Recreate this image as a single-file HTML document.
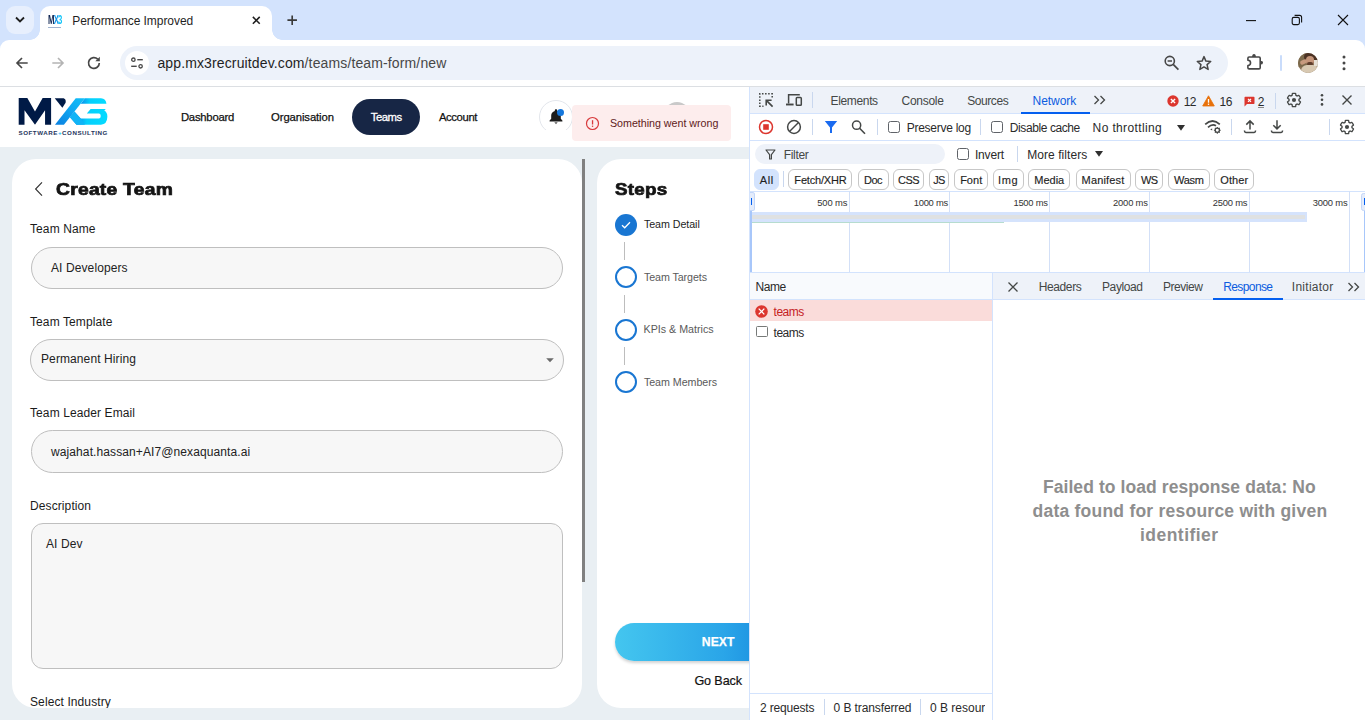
<!DOCTYPE html>
<html lang="en">
<head>
<meta charset="utf-8">
<title>Performance Improved</title>
<style>
*{box-sizing:border-box;margin:0;padding:0}
html,body{width:1365px;height:720px;overflow:hidden;background:#fff}
body{position:relative;font-family:"Liberation Sans",sans-serif;color:#1f1f1f}
.abs{position:absolute}
.t{position:absolute;white-space:nowrap;line-height:1}
svg{position:absolute;overflow:visible}
/* ---------- browser chrome ---------- */
#tabstrip{left:0;top:0;width:1365px;height:52px;background:#d3e3fd}
#tabsearch{left:6px;top:6px;width:28px;height:28px;border-radius:9px;background:#e7effd}
#tab{left:40px;top:6px;width:232px;height:34px;background:#fff;border-radius:10px 10px 0 0}
#tab:before,#tab:after{content:"";position:absolute;bottom:0;width:10px;height:10px}
#tab:before{left:-10px;background:radial-gradient(circle at 0 0,transparent 9.5px,#fff 10px)}
#tab:after{right:-10px;background:radial-gradient(circle at 100% 0,transparent 9.5px,#fff 10px)}
#toolbar{left:0;top:40px;width:1365px;height:46px;background:#fff;border-radius:9px 9px 0 0}
#tbline{left:0;top:86px;width:1365px;height:1px;background:#dcdfe3}
#omni{left:120px;top:46px;width:1108px;height:34px;border-radius:17px;background:#edf2fa}
#siteinfo{left:124.500px;top:51px;width:24px;height:24px;border-radius:12px;background:#fff}
.chrometxt{font-family:"Liberation Sans",sans-serif}
/* ---------- page ---------- */
#page{left:0;top:87px;width:749px;height:633px;background:#e9eff3;overflow:hidden}
#hdr{left:0;top:0;width:750px;height:60px;background:#fff}
.nav{font-size:11.3px;color:#111;-webkit-text-stroke:0.25px #111}
#teams{left:352px;top:12px;width:68px;height:36px;border-radius:18px;background:#172645}
.card{background:#fff;border-radius:24px}
.lbl{font-size:12px;color:#1b1b1b;letter-spacing:.1px}
.inp{position:absolute;left:30px;width:532px;background:#f7f7f7;border:1px solid #bfbfbf}
.val{font-size:12px;color:#222;letter-spacing:.1px}
.step{font-size:10.700px;color:#5a5a5a}
/* ---------- devtools ---------- */
#dt{left:749px;top:87px;width:616px;border-left:1px solid #d3e3fd;height:633px;background:#fff;overflow:hidden;font-size:12px;color:#2a2a2a}
.dtbar{background:#eef2f9}
.hl{background:#d3e3fd}
.vsep{position:absolute;width:1px;background:#c9d7ee}
.chip{position:absolute;top:82px;height:21px;border:1px solid #c7c7c7;border-radius:6px;font-size:11px;line-height:20px;text-align:center;color:#1f1f1f;background:#fff;-webkit-text-stroke:0.150px #1f1f1f}
.msg{font-size:17.500px;font-weight:bold;color:#8e8e8e}
.cb{position:absolute;width:12px;height:12px;border:1px solid #5f6368;border-radius:2.5px;background:#fff}
.tick{position:absolute;top:104px;width:1px;height:82px;background:#d3e0f7}
.tl{position:absolute;top:110.500px;font-size:9.4px;color:#333;white-space:nowrap;line-height:1;text-align:right;width:60px}
</style>
</head>
<body>
<!-- ================= BROWSER CHROME ================= -->
<div id="tabstrip" class="abs"></div>
<div id="tabsearch" class="abs"></div>
<svg style="left:14px;top:16px" width="12" height="8" viewBox="0 0 12 8"><path d="M2 1.5 L6 5.5 L10 1.5" fill="none" stroke="#1f1f1f" stroke-width="1.8"/></svg>
<div id="tab" class="abs"></div>
<div id="toolbar" class="abs"></div>
<div id="tbline" class="abs"></div>
<div class="t chrometxt" style="left:72.30px;top:15.400px;font-size:12px;color:#1f1f1f;letter-spacing:-0.062px">Performance Improved</div>
<div id="omni" class="abs"></div>
<div id="siteinfo" class="abs"></div>
<div class="t chrometxt" style="left:157.400px;top:56px;font-size:14px;color:#1f1f1f;letter-spacing:0.130px">app.mx3recruitdev.com<span style="color:#474747">/teams/team-form/new</span></div>

<!-- favicon -->
<div class="t" style="left:48px;top:13.500px;font-size:12.500px;font-weight:bold;color:#0d2350;letter-spacing:-1.300px;transform:scaleX(.62);transform-origin:0 50%">M<span style="color:#1296ea">X</span><span style="color:#10c4f8">3</span></div>
<div class="abs" style="left:48px;top:26.500px;width:13px;height:1px;background:#9fb3cf"></div>
<!-- tab close / new tab -->
<svg style="left:251.700px;top:15.700px" width="8.600" height="8.600" viewBox="0 0 10 10"><path d="M1 1 L9 9 M9 1 L1 9" stroke="#1f1f1f" stroke-width="1.800" fill="none"/></svg>
<svg style="left:286.800px;top:14.800px" width="10.400" height="10.400" viewBox="0 0 12 12"><path d="M6 0.500 V11.500 M0.500 6 H11.500" stroke="#3a3a3a" stroke-width="1.900" fill="none"/></svg>
<!-- window controls -->
<svg style="left:1246px;top:20px" width="10" height="2" viewBox="0 0 10 2"><path d="M0 .6 H10" stroke="#111" stroke-width="1.100"/></svg>
<svg style="left:1291px;top:14px" width="12" height="12" viewBox="0 0 12 12"><rect x="1.200" y="3.400" width="7.200" height="7.200" rx="1.600" fill="none" stroke="#111" stroke-width="1.100"/><path d="M3.600 1.400 H8.600 Q10.600 1.400 10.600 3.400 V8.400" fill="none" stroke="#111" stroke-width="1.100"/></svg>
<svg style="left:1338px;top:15px" width="10" height="10" viewBox="0 0 10 10"><path d="M0 0 L10 10 M10 0 L0 10" stroke="#111" stroke-width="1.100" fill="none"/></svg>
<!-- nav buttons -->
<svg style="left:15px;top:56px" width="14" height="14" viewBox="0 0 16 16"><path d="M14.500 8 H2.500 M8 2.300 L2.300 8 L8 13.700" fill="none" stroke="#474747" stroke-width="1.900"/></svg>
<svg style="left:51px;top:56px" width="14" height="14" viewBox="0 0 16 16"><path d="M1.500 8 H13.500 M8 2.300 L13.700 8 L8 13.700" fill="none" stroke="#b4b4b4" stroke-width="1.900"/></svg>
<svg style="left:86px;top:55px" width="16" height="16" viewBox="0 0 16 16"><path d="M13.300 8 A5.400 5.400 0 1 1 11.700 4.150" fill="none" stroke="#474747" stroke-width="1.700"/><path d="M13.800 1.800 V6.300 H9.300 Z" fill="#474747"/></svg>
<!-- site info (tune) icon -->
<svg style="left:130px;top:56px" width="14" height="14" viewBox="0 0 14 14"><circle cx="3.400" cy="3.700" r="1.700" fill="none" stroke="#474747" stroke-width="1.300"/><path d="M7.300 3.700 H12.800" stroke="#474747" stroke-width="1.400"/><circle cx="10.600" cy="10.300" r="1.700" fill="none" stroke="#474747" stroke-width="1.300"/><path d="M1.200 10.300 H6.700" stroke="#474747" stroke-width="1.400"/></svg>
<!-- zoom, star -->
<svg style="left:1163.100px;top:53.700px" width="18" height="18" viewBox="0 0 18 18"><circle cx="6.800" cy="7" r="4.600" fill="none" stroke="#474747" stroke-width="1.600"/><path d="M4.600 7 H9" stroke="#474747" stroke-width="1.500"/><path d="M10.200 10.400 L15.400 15.600" stroke="#474747" stroke-width="1.700"/></svg>
<svg style="left:1196px;top:54.700px" width="16" height="16" viewBox="0 0 16 16"><path d="M8 1.600 L9.900 6.100 L14.700 6.500 L11.050 9.650 L12.150 14.400 L8 11.900 L3.850 14.400 L4.950 9.650 L1.300 6.500 L6.100 6.100 Z" fill="none" stroke="#474747" stroke-width="1.500" stroke-linejoin="round"/></svg>
<!-- extensions -->
<svg style="left:1246px;top:53px" width="18" height="18" viewBox="0 0 18 18"><path d="M3.100 4 H13 Q14.200 4 14.200 5.200 V14.700 Q14.200 15.900 13 15.900 H3.100 Q1.900 15.900 1.900 14.700 V12.500 A2.650 2.650 0 0 0 1.900 7.200 V5.200 Q1.900 4 3.100 4 Z" fill="none" stroke="#474747" stroke-width="1.600" stroke-linejoin="round"/><path d="M6.100 4 A1.900 3 0 0 1 9.900 4 Z" fill="#474747"/><path d="M14.200 7.800 A2.800 1.900 0 0 1 14.200 11.600 Z" fill="#474747"/></svg>
<div class="abs" style="left:1280px;top:55px;width:2px;height:15.700px;background:#c9dcfb;border-radius:1px"></div>
<!-- avatar -->
<div class="abs" style="left:1298px;top:53px;width:20px;height:20px;border-radius:10px;overflow:hidden;background:#8a7358"><div class="abs" style="left:0;top:0;width:20px;height:20px;filter:blur(.7px)">
  <div class="abs" style="left:-2px;top:-2px;width:12px;height:16px;background:#7c6a4c"></div>
  <div class="abs" style="left:6px;top:-2px;width:16px;height:12px;border-radius:6px;background:#4b3224"></div>
  <div class="abs" style="left:8px;top:3px;width:8px;height:9px;border-radius:4px;background:#c4957a"></div>
  <div class="abs" style="left:9px;top:9px;width:6px;height:4px;border-radius:2px;background:#5e3d2c"></div>
  <div class="abs" style="left:3px;top:12px;width:18px;height:10px;border-radius:6px 6px 0 0;background:#d8c9b2"></div>
  <div class="abs" style="left:2px;top:7px;width:7px;height:4px;border-radius:2px;background:#c79a7e;transform:rotate(-25deg)"></div>
  <div class="abs" style="left:16px;top:7px;width:5px;height:6px;background:#e6e0d6"></div>
</div></div>
<svg style="left:1341px;top:54px" width="6" height="18" viewBox="0 0 6 18"><circle cx="3" cy="3" r="1.500" fill="#474747"/><circle cx="3" cy="8.900" r="1.500" fill="#474747"/><circle cx="3" cy="14.800" r="1.500" fill="#474747"/></svg>

<!-- ================= PAGE ================= -->
<div id="page" class="abs">
  <div id="hdr" class="abs"></div>
  <!-- logo -->
  <svg style="left:10px;top:3px" width="110" height="55" viewBox="0 0 1365 682">
    <polygon points="108,100 215,100 310,268 405,100 510,100 510,430 435,430 435,250 312,428 308,428 180,250 180,430 108,430" fill="#001a46"/>
  </svg>
  <svg style="left:50px;top:7px" width="62" height="34" viewBox="0 0 1313 720">
    <defs>
      <linearGradient id="gx" x1="0" y1="1" x2="1" y2="0"><stop offset="0" stop-color="#0a7fe0"/><stop offset="0.55" stop-color="#0fa8f2"/><stop offset="1" stop-color="#12c0f8"/></linearGradient>
      <linearGradient id="gb" x1="0" y1="0" x2="1" y2="0"><stop offset="0" stop-color="#0c8eea"/><stop offset="0.35" stop-color="#05cffc"/><stop offset="1" stop-color="#04dbff"/></linearGradient>
      <linearGradient id="gb2" x1="0" y1="0" x2="1" y2="0"><stop offset="0" stop-color="#0d9ff0"/><stop offset="0.18" stop-color="#0c8eea"/><stop offset="0.45" stop-color="#05cffc"/><stop offset="1" stop-color="#04dbff"/></linearGradient>
    </defs>
    <path d="M100,90 L290,90 Q345,110 330,185 L262,290 Z" fill="#001a46"/>
    <path d="M650,205 L1195,205 Q1185,100 1080,90 L740,90 Z" fill="url(#gb)"/>
    <path d="M517,370 L650,520 L1040,520 Q1075,515 1075,468 Q1075,420 1040,415 L780,415 L860,315 L1182,315 L1150,352 Q1215,390 1215,480 Q1210,640 1080,650 L560,650 L422,490 Z" fill="url(#gb2)"/>
    <path d="M105,650 L295,650 L740,90 L545,90 Z" fill="url(#gx)"/>
    <path d="M422,490 L517,370 L650,520 L740,650 L560,650 Z" fill="#10b4f6"/>
  </svg>
  <div class="t" style="left:18.5px;top:43.4px;font-size:6.2px;font-weight:bold;color:#24345c;letter-spacing:0.540px">SOFTWARE<span style="color:#12b8f5">+</span>CONSULTING</div>
  <!-- nav -->
  <div class="t nav" style="left:180.90px;top:25px;letter-spacing:-0.223px">Dashboard</div>
  <div class="t nav" style="left:271.10px;top:25px;letter-spacing:-0.106px">Organisation</div>
  <div id="teams" class="abs"></div>
  <div class="t nav" style="left:370.70px;top:25px;color:#fff;-webkit-text-stroke:0.3px #fff;letter-spacing:-0.431px">Teams</div>
  <div class="t nav" style="left:438.90px;top:25px;letter-spacing:-0.380px">Account</div>
  <!-- bell -->
  <div class="abs" style="left:539px;top:13px;width:34px;height:30px;overflow:hidden"><div class="abs" style="left:0;top:0;width:34px;height:34px;border-radius:17px;border:1px solid #e3e6ec;background:#fff"></div></div>
  <svg style="left:548px;top:21px" width="16" height="18" viewBox="0 0 16 18"><path d="M8 1.2c-.7 0-1.2.5-1.2 1.2v.5C4.500 3.500 3.200 5.400 3.200 7.600v3.200L1.600 12.600v.9h12.800v-.9l-1.600-1.800V7.600c0-2.200-1.300-4.100-3.600-4.700v-.5c0-.7-.5-1.200-1.200-1.200z" fill="#1c1c1c"/><path d="M6.300 14.300 L9.700 14.300 L8 16.200 Z" fill="#555"/></svg>
  <div class="abs" style="left:557px;top:21.500px;width:7px;height:7px;border-radius:4px;background:#1677dc"></div>
  <!-- avatar behind toast -->
  <div class="abs" style="left:664px;top:15px;width:26px;height:26px;border-radius:13px;background:#c9c9c9"></div>
  <!-- toast -->
  <div class="abs" style="left:572px;top:18px;width:159px;height:36px;border-radius:4px;background:#fdeded"></div>
  <svg style="left:584.500px;top:28.800px" width="15" height="15" viewBox="0 0 15 15"><circle cx="7.500" cy="7.500" r="6" fill="none" stroke="#d8393b" stroke-width="1.200"/><rect x="6.900" y="4.200" width="1.300" height="4.300" fill="#d8393b"/><rect x="6.900" y="9.600" width="1.300" height="1.300" fill="#d8393b"/></svg>
  <div class="t" style="left:610.00px;top:31px;font-size:10.700px;color:#5f2120;letter-spacing:-0.020px">Something went wrong</div>

  <!-- card 1 -->
  <div class="abs card" style="left:12px;top:72px;width:570px;height:549px;overflow:hidden">
    <svg style="left:22px;top:22.800px" width="10" height="14" viewBox="0 0 10 14"><path d="M8 0.400 L1.600 7 L8 13.600" fill="none" stroke="#333" stroke-width="1.150"/></svg>
    <div class="t" id="h1" style="left:44px;top:22px;font-size:16.500px;font-weight:bold;color:#141414;-webkit-text-stroke:0.720px #141414;transform:scaleX(1.170);transform-origin:0 50%;letter-spacing:0.200px">Create Team</div>
    <div class="t lbl" style="left:18px;top:64px">Team Name</div>
    <div class="inp" style="left:19px;top:88px;height:42px;border-radius:21px"></div>
    <div class="t val" style="left:39px;top:103px">AI Developers</div>
    <div class="t lbl" style="left:18px;top:157px">Team Template</div>
    <div class="inp" style="left:18px;top:180px;height:42px;border-radius:21px;width:534px"></div>
    <div class="t val" style="left:29px;top:194px">Permanent Hiring</div>
    <svg style="left:534px;top:199px" width="8" height="5" viewBox="0 0 8 5"><path d="M0.200 0.300 L7.800 0.300 L4 4.300 Z" fill="#6a6a6a"/></svg>
    <div class="t lbl" style="left:18px;top:248px">Team Leader Email</div>
    <div class="inp" style="left:19px;top:271px;height:42.600px;border-radius:21.300px"></div>
    <div class="t val" style="left:39px;top:287px">wajahat.hassan+AI7@nexaquanta.ai</div>
    <div class="t lbl" style="left:18px;top:341px">Description</div>
    <div class="inp" style="left:19px;top:364px;height:146px;border-radius:12px"></div>
    <div class="t val" style="left:34px;top:379px">AI Dev</div>
    <div class="t lbl" style="left:18px;top:537px">Select Industry</div>
  </div>
  <!-- scrollbar -->
  <div class="abs" style="left:582px;top:72px;width:3px;height:423px;background:#808080"></div>

  <!-- card 2 -->
  <div class="abs card" style="left:597px;top:72px;width:200px;height:549px;overflow:hidden">
    <div class="t" id="h2" style="left:18px;top:22px;font-size:16.500px;font-weight:bold;color:#141414;-webkit-text-stroke:0.720px #141414;transform:scaleX(1.140);transform-origin:0 50%;letter-spacing:0.200px">Steps</div>
    <div class="abs" style="left:27px;top:83px;width:1px;height:18px;background:#bdbdbd"></div>
    <div class="abs" style="left:27px;top:136px;width:1px;height:18px;background:#bdbdbd"></div>
    <div class="abs" style="left:27px;top:188px;width:1px;height:18px;background:#bdbdbd"></div>
    <div class="abs" style="left:17.700px;top:54.700px;width:22.500px;height:22.500px;border-radius:12px;background:#1976d2"></div>
    <svg style="left:24px;top:62px" width="10" height="8" viewBox="0 0 10 8"><path d="M1 4.200 L3.700 6.800 L9 1.300" fill="none" stroke="#fff" stroke-width="1.300"/></svg>
    <div class="abs" style="left:18px;top:107px;width:22px;height:22px;border-radius:11px;border:2px solid #1976d2"></div>
    <div class="abs" style="left:18px;top:160px;width:22px;height:22px;border-radius:11px;border:2px solid #1976d2"></div>
    <div class="abs" style="left:18px;top:212px;width:22px;height:22px;border-radius:11px;border:2px solid #1976d2"></div>
    <div class="t step" style="left:46.90px;top:60.200px;color:#1d1d1d;letter-spacing:-0.055px">Team Detail</div>
    <div class="t step" style="left:46.90px;top:112.5px;letter-spacing:-0.073px">Team Targets</div>
    <div class="t step" style="left:46.500px;top:164.700px">KPIs &amp; Matrics</div>
    <div class="t step" style="left:46.90px;top:217.5px;letter-spacing:-0.045px">Team Members</div>
    <div class="abs" style="left:18px;top:464px;width:210px;height:38px;border-radius:19px;background:linear-gradient(90deg,#44c6ef 0%,#2aa5e8 52%,#1b8fe0 72%);box-shadow:0 2px 3px rgba(0,0,0,.18)"></div>
    <div class="t" style="left:104.800px;top:477px;font-size:12.200px;font-weight:bold;color:#fff;letter-spacing:0.050px;-webkit-text-stroke:0.250px #fff">NEXT</div>
    <div class="t" style="left:97.40px;top:515.500px;font-size:12.600px;color:#111;-webkit-text-stroke:0.200px #111;letter-spacing:-0.108px">Go Back</div>
  </div>
</div>

<!-- ================= DEVTOOLS ================= -->
<div id="dt" class="abs">
  <div class="abs" style="left:0;top:0;width:0px;height:633px"></div>
  <!-- main tab bar -->
  <div class="abs dtbar" style="left:0;top:0;width:615px;height:26px"></div>
  <div class="abs hl" style="left:0;top:26px;width:615px;height:1px"></div>
  <div class="vsep" style="left:62px;top:5px;height:16px"></div>
  <div class="t" style="left:80.61px;top:8px;color:#444746;letter-spacing:-0.360px">Elements</div>
  <div class="t" style="left:151.61px;top:8px;color:#444746;letter-spacing:-0.292px">Console</div>
  <div class="t" style="left:217.21px;top:8px;color:#444746;letter-spacing:-0.420px">Sources</div>
  <div class="t" style="left:282.50px;top:8px;color:#0b5ce0;letter-spacing:-0.035px">Network</div>
  <div class="abs" style="left:271px;top:25px;width:69px;height:2px;background:#045fef"></div>
  <div class="t" style="left:433.80px;top:8.500px;letter-spacing:-0.600px">12</div>
  <div class="t" style="left:469.61px;top:8.500px;letter-spacing:-0.600px">16</div>
  <div class="t" style="left:507.80px;top:8.500px;letter-spacing:0.000px">2</div>
  <div class="vsep" style="left:525px;top:6px;height:16px"></div>
  <!-- network toolbar -->
  <div class="abs" style="left:0;top:27px;width:615px;height:26px;background:#fff"></div>
  <div class="abs hl" style="left:0;top:53px;width:615px;height:1px"></div>
  <div class="vsep" style="left:62px;top:32px;height:16px"></div>
  <div class="vsep" style="left:127px;top:32px;height:16px"></div>
  <div class="cb" style="left:138px;top:34px"></div>
  <div class="t" style="left:156.71px;top:35px;letter-spacing:-0.263px">Preserve log</div>
  <div class="vsep" style="left:230px;top:32px;height:16px"></div>
  <div class="cb" style="left:241px;top:34px"></div>
  <div class="t" style="left:259.80px;top:35px;letter-spacing:-0.408px">Disable cache</div>
  <div class="t" style="left:342.61px;top:35px;letter-spacing:0.365px">No throttling</div>
  <div class="vsep" style="left:481px;top:32px;height:16px"></div>
  <div class="vsep" style="left:579px;top:32px;height:16px"></div>
  <!-- filter row -->
  <div class="abs" style="left:5px;top:57px;width:190px;height:20px;border-radius:10px;background:#eef2f9"></div>
  <div class="t" style="left:33.71px;top:62px;color:#444746;letter-spacing:-0.314px">Filter</div>
  <div class="cb" style="left:207px;top:61px"></div>
  <div class="t" style="left:224.91px;top:62px;letter-spacing:-0.176px">Invert</div>
  <div class="vsep" style="left:266.500px;top:59px;height:16px"></div>
  <div class="t" style="left:277.30px;top:62px;letter-spacing:0.051px">More filters</div>
  <!-- chips -->
  <div class="chip" style="left:4.4px;width:24.6px;border-color:#d3e3fd;background:#d3e3fd;letter-spacing:0.560px">All</div>
  <div class="vsep" style="left:32.500px;top:84px;height:16px"></div>
  <div class="chip" style="left:38.4px;width:64px;letter-spacing:-0.193px">Fetch/XHR</div>
  <div class="chip" style="left:107.5px;width:31px;letter-spacing:-0.531px">Doc</div>
  <div class="chip" style="left:143.4px;width:30.2px;letter-spacing:-0.600px">CSS</div>
  <div class="chip" style="left:178.5px;width:20.9px;letter-spacing:-0.600px">JS</div>
  <div class="chip" style="left:204.1px;width:34.2px;letter-spacing:0.015px">Font</div>
  <div class="chip" style="left:243px;width:30.5px;letter-spacing:0.640px">Img</div>
  <div class="chip" style="left:278.2px;width:42.1px">Media</div>
  <div class="chip" style="left:325.5px;width:55.1px;letter-spacing:0.169px">Manifest</div>
  <div class="chip" style="left:385.2px;width:28.2px;letter-spacing:-0.600px">WS</div>
  <div class="chip" style="left:418px;width:41.6px;letter-spacing:-0.297px">Wasm</div>
  <div class="chip" style="left:464.2px;width:40.1px;letter-spacing:0.088px">Other</div>
  <!-- overview -->
  <div class="abs hl" style="left:0;top:104px;width:615px;height:1px"></div>
  <div class="tick" style="left:99px"></div><div class="tick" style="left:199px"></div><div class="tick" style="left:299px"></div>
  <div class="tick" style="left:399px"></div><div class="tick" style="left:499px"></div><div class="tick" style="left:599px"></div>
  <div class="tl" style="left:37.25px;letter-spacing:-0.111px">500 ms</div><div class="tl" style="left:137.87px;letter-spacing:-0.262px">1000 ms</div><div class="tl" style="left:237.77px;letter-spacing:-0.228px">1500 ms</div>
  <div class="tl" style="left:337.77px;letter-spacing:-0.178px">2000 ms</div><div class="tl" style="left:437.37px;letter-spacing:-0.178px">2500 ms</div><div class="tl" style="left:537.47px;letter-spacing:-0.178px">3000 ms</div>
  <div class="abs" style="left:2px;top:125.400px;width:555px;height:9.600px;background:#d5e3fc"></div>
  <div class="abs" style="left:2px;top:127.500px;width:553px;height:4.800px;background:#dfe1e2"></div>
  <div class="abs" style="left:2px;top:134.700px;width:252px;height:1px;background:#b6dccf"></div>
  <div class="abs" style="left:0;top:123px;width:2px;height:62px;background:#a8c7fa"></div>
  <div class="abs" style="left:0;top:105.400px;width:4.500px;height:18.200px;border-radius:0 2.500px 2.500px 0;background:#e4ecfb;border:1px solid #c3d6f8;border-left:0"></div>
  <div class="abs" style="left:1px;top:110.800px;width:1px;height:7.200px;background:#045fef"></div>
  <div class="abs" style="left:613.800px;top:123px;width:2px;height:62px;background:#a8c7fa"></div>
  <div class="abs" style="left:611.300px;top:106px;width:6px;height:17.500px;border-radius:2.500px 0 0 2.500px;background:#e4ecfb;border:1px solid #c3d6f8"></div>
  <div class="abs" style="left:614px;top:110.800px;width:1px;height:7.200px;background:#045fef"></div>
  <div class="abs hl" style="left:0;top:185px;width:615px;height:1px"></div>
  <!-- request list -->
  <div class="abs" style="left:0;top:186px;width:242px;height:26px;background:#f8fafd"></div>
  <div class="abs hl" style="left:0;top:212px;width:242px;height:1px"></div>
  <div class="t" style="left:5.50px;top:194px;letter-spacing:-0.445px">Name</div>
  <div class="abs" style="left:0;top:213px;width:242px;height:21px;background:#fadcda"></div>
  <div class="t" style="left:23.60px;top:218.500px;color:#c5221f;letter-spacing:-0.494px">teams</div>
  <div class="t" style="left:23.60px;top:239.500px;letter-spacing:-0.494px">teams</div>
  <div class="abs" style="left:6px;top:238.700px;width:11.800px;height:11.800px;border:1.500px solid #777a78;border-radius:1.500px"></div>
  <div class="abs hl" style="left:242px;top:186px;width:1px;height:447px"></div>
  <!-- status bar -->
  <div class="abs hl" style="left:0;top:606px;width:242px;height:1px"></div>
  <div class="abs" style="left:0;top:607px;width:235px;height:26px;overflow:hidden">
    <div class="t" style="left:10.00px;top:8px;letter-spacing:-0.170px">2 requests</div>
    <div class="vsep" style="left:74px;top:5px;height:16px"></div>
    <div class="t" style="left:83.60px;top:8px;letter-spacing:-0.107px">0 B transferred</div>
    <div class="vsep" style="left:170px;top:5px;height:16px"></div>
    <div class="t" style="left:180px;top:8px">0 B resources</div>
  </div>
  <!-- detail pane -->
  <div class="abs dtbar" style="left:243px;top:186px;width:372px;height:26px"></div>
  <div class="abs hl" style="left:243px;top:212px;width:372px;height:1px"></div>
  <div class="t" style="left:288.70px;top:194px;color:#444746;letter-spacing:-0.376px">Headers</div>
  <div class="t" style="left:352.00px;top:194px;color:#444746;letter-spacing:-0.399px">Payload</div>
  <div class="t" style="left:412.90px;top:194px;color:#444746;letter-spacing:-0.452px">Preview</div>
  <div class="t" style="left:473.20px;top:194px;color:#0b5ce0;letter-spacing:-0.600px">Response</div>
  <div class="abs" style="left:463px;top:211px;width:70px;height:2px;background:#045fef"></div>
  <div class="t" style="left:541.80px;top:194px;color:#444746;letter-spacing:0.268px">Initiator</div>
  <div class="t msg" style="left:292.90px;top:391.700px;letter-spacing:0.080px">Failed to load response data<span>:</span> No</div>
  <div class="t msg" style="left:282.50px;top:415.500px;letter-spacing:0.235px">data found for resource with given</div>
  <div class="t msg" style="left:390.00px;top:439.500px;letter-spacing:0.468px">identifier</div>
  <!-- devtools icons: main bar (dt coords = abs - (750,87)) -->
  <svg style="left:8px;top:5px" width="16" height="16" viewBox="0 0 16 16"><path d="M14.200 5.500 V1.800 H1.800 V14.200 H5.500" fill="none" stroke="#444746" stroke-width="1.500" stroke-dasharray="1.550 1.550"/><path d="M14.600 14.600 L8.600 8.600 M8.200 13.600 V8.200 H13.600" fill="none" stroke="#444746" stroke-width="1.600"/></svg>
  <svg style="left:35px;top:6px" width="18" height="14" viewBox="0 0 18 14"><path d="M3.600 10.600 V1.700 H14.800" fill="none" stroke="#444746" stroke-width="1.500"/><path d="M1 11.500 H8.600" stroke="#444746" stroke-width="1.900"/><rect x="11.300" y="4.600" width="5" height="7.600" rx="0.800" fill="none" stroke="#444746" stroke-width="1.500"/></svg>
  <svg style="left:343px;top:8px" width="14" height="10" viewBox="0 0 14 10"><path d="M1.500 1 L5.500 5 L1.500 9 M7.500 1 L11.500 5 L7.500 9" fill="none" stroke="#444746" stroke-width="1.300"/></svg>
  <svg style="left:416.800px;top:8.200px" width="12" height="12" viewBox="0 0 12 12"><circle cx="6" cy="6" r="5.700" fill="#dc362e"/><path d="M3.900 3.900 L8.100 8.100 M8.100 3.900 L3.900 8.100" stroke="#fff" stroke-width="1.400"/></svg>
  <svg style="left:452px;top:8px" width="13" height="12" viewBox="0 0 13 12"><path d="M6.500 0.800 L12.300 11 H0.700 Z" fill="#e8710a" stroke="#e8710a" stroke-width="0.800" stroke-linejoin="round"/><rect x="5.850" y="4" width="1.300" height="3.700" fill="#fff"/><rect x="5.850" y="8.600" width="1.300" height="1.300" fill="#fff"/></svg>
  <svg style="left:494px;top:9px" width="11" height="11" viewBox="0 0 11 11"><path d="M0.500 1.500 Q0.500 0.800 1.200 0.800 H9.800 Q10.500 0.800 10.500 1.500 V7.300 Q10.500 8 9.800 8 H3 L0.500 10.500 Z" fill="#dc362e"/><path d="M4 2.800 L7 5.800 M7 2.800 L4 5.800" stroke="#fff" stroke-width="1.200"/></svg>
  <div class="abs" style="left:507.500px;top:20px;width:6.500px;height:1px;background:#8a8a8a"></div>
  <svg id="gear1" style="left:535.500px;top:5px" width="16" height="16" viewBox="0 0 24 24"><path d="M19.430 12.980c.040-.320.070-.640.070-.980s-.030-.660-.070-.980l2.110-1.650c.190-.150.240-.420.120-.640l-2-3.460c-.120-.220-.390-.300-.610-.220l-2.490 1c-.520-.400-1.080-.730-1.690-.980l-.380-2.650C14.460 2.180 14.250 2 14 2h-4c-.250 0-.460.180-.490.420l-.380 2.650c-.610.250-1.170.590-1.690.980l-2.490-1c-.230-.090-.490 0-.610.220l-2 3.460c-.130.220-.070.490.120.640l2.110 1.650c-.040.320-.070.650-.070.980s.030.660.070.980l-2.110 1.650c-.190.150-.240.420-.120.640l2 3.460c.120.220.390.300.610.220l2.490-1c.520.400 1.080.730 1.690.980l.380 2.650c.030.240.240.420.490.420h4c.250 0 .460-.180.490-.420l.380-2.650c.610-.250 1.170-.590 1.690-.980l2.490 1c.230.090.490 0 .610-.220l2-3.460c.120-.220.070-.490-.120-.640l-2.110-1.650z" fill="none" stroke="#444746" stroke-width="2"/><circle cx="12" cy="12" r="3.100" fill="#444746"/></svg>
  <svg style="left:570px;top:6px" width="4" height="14" viewBox="0 0 4 14"><circle cx="2" cy="2.200" r="1.300" fill="#444746"/><circle cx="2" cy="6.800" r="1.300" fill="#444746"/><circle cx="2" cy="11.400" r="1.300" fill="#444746"/></svg>
  <svg style="left:592px;top:8px" width="10" height="10" viewBox="0 0 10 10"><path d="M0.500 0.500 L9.500 9.500 M9.500 0.500 L0.500 9.500" stroke="#444746" stroke-width="1.400" fill="none"/></svg>
  <!-- devtools icons: network toolbar -->
  <svg style="left:8px;top:32px" width="16" height="16" viewBox="0 0 16 16"><circle cx="8" cy="8" r="6.500" fill="none" stroke="#dc362e" stroke-width="1.500"/><rect x="5.200" y="5.200" width="5.600" height="5.600" fill="#dc362e"/></svg>
  <svg style="left:36px;top:32px" width="16" height="16" viewBox="0 0 16 16"><circle cx="8" cy="8" r="6.400" fill="none" stroke="#444746" stroke-width="1.500"/><path d="M12.500 3.500 L3.500 12.500" stroke="#444746" stroke-width="1.500"/></svg>
  <svg style="left:74px;top:33px" width="14" height="14" viewBox="0 0 14 14"><path d="M0.800 1 H13.200 L8 7.500 V13 H6 V7.500 Z" fill="#1a6bf0"/></svg>
  <svg style="left:100px;top:32px" width="16" height="16" viewBox="0 0 16 16"><circle cx="6.600" cy="6.200" r="4.100" fill="none" stroke="#444746" stroke-width="1.500"/><path d="M9.600 9.300 L15 14.800" stroke="#444746" stroke-width="1.600"/></svg>
  <svg style="left:427px;top:38px" width="8" height="6" viewBox="0 0 8 6"><path d="M0 0 H8 L4 5.800 Z" fill="#303030"/></svg>
  <svg style="left:454px;top:32px" width="18" height="15" viewBox="0 0 18 15"><path d="M1.200 5.400 Q8.500 -1.400 15.800 5.400" fill="none" stroke="#444746" stroke-width="1.700"/><path d="M4 8.300 Q8.300 4.300 12 6.700" fill="none" stroke="#444746" stroke-width="1.700"/><path d="M6.200 10.300 L8.200 9.400 V11.600 Z" fill="#444746"/><path d="M13.300 7.900 V14.700 M9.900 11.300 H16.700 M10.900 8.900 L15.700 13.700 M15.700 8.900 L10.900 13.700" stroke="#444746" stroke-width="1.100"/><circle cx="13.300" cy="11.300" r="2.100" fill="#fff" stroke="#444746" stroke-width="1.300"/></svg>
  <svg style="left:493px;top:33px" width="14" height="14" viewBox="0 0 14 14"><path d="M7 9.600 V1 M3.300 4.600 L7 0.900 L10.700 4.600" fill="none" stroke="#444746" stroke-width="1.500"/><path d="M1.500 10.400 V11.100 Q1.500 12.500 2.900 12.500 H11.100 Q12.500 12.500 12.500 11.100 V10.400" fill="none" stroke="#444746" stroke-width="1.500"/></svg>
  <svg style="left:520px;top:33px" width="14" height="14" viewBox="0 0 14 14"><path d="M7 0.200 V8.800 M3.300 5.200 L7 8.900 L10.700 5.200" fill="none" stroke="#444746" stroke-width="1.500"/><path d="M1.500 10.400 V11.100 Q1.500 12.500 2.900 12.500 H11.100 Q12.500 12.500 12.500 11.100 V10.400" fill="none" stroke="#444746" stroke-width="1.500"/></svg>
  <svg id="gear2" style="left:589px;top:31.500px" width="16" height="16" viewBox="0 0 24 24"><path d="M19.430 12.980c.040-.320.070-.640.070-.980s-.030-.660-.070-.980l2.110-1.650c.190-.150.240-.420.120-.640l-2-3.460c-.120-.220-.390-.300-.610-.220l-2.490 1c-.520-.400-1.080-.730-1.690-.980l-.380-2.650C14.460 2.180 14.250 2 14 2h-4c-.250 0-.460.180-.490.420l-.380 2.650c-.610.250-1.170.590-1.690.980l-2.490-1c-.230-.090-.490 0-.610.220l-2 3.460c-.130.220-.070.490.120.640l2.110 1.650c-.040.320-.070.650-.070.980s.030.660.070.980l-2.110 1.650c-.190.150-.240.420-.120.640l2 3.460c.120.220.390.300.610.220l2.490-1c.520.400 1.080.730 1.690.980l.380 2.650c.030.240.240.420.490.420h4c.250 0 .460-.180.490-.420l.380-2.650c.610-.250 1.170-.590 1.690-.980l2.490 1c.230.090.490 0 .610-.220l2-3.460c.120-.220.070-.490-.120-.640l-2.110-1.650z" fill="none" stroke="#444746" stroke-width="2"/><circle cx="12" cy="12" r="3.100" fill="#444746"/></svg>
  <!-- filter row icons -->
  <svg style="left:15px;top:62px" width="11" height="11" viewBox="0 0 11 11"><path d="M1 1 H10 L6.400 5.600 V10 H4.600 V5.600 Z" fill="none" stroke="#444746" stroke-width="1.200" stroke-linejoin="round"/></svg>
  <svg style="left:345px;top:64px" width="8" height="6" viewBox="0 0 8 6"><path d="M0 0 H8 L4 5.800 Z" fill="#303030"/></svg>
  <!-- detail pane icons -->
  <svg style="left:258px;top:195px" width="10" height="10" viewBox="0 0 10 10"><path d="M0.500 0.500 L9.500 9.500 M9.500 0.500 L0.500 9.500" stroke="#444746" stroke-width="1.300" fill="none"/></svg>
  <svg style="left:597px;top:195px" width="14" height="10" viewBox="0 0 14 10"><path d="M1.500 1 L5.500 5 L1.500 9 M7.500 1 L11.500 5 L7.500 9" fill="none" stroke="#444746" stroke-width="1.300"/></svg>
  <svg style="left:5px;top:217.700px" width="13" height="13" viewBox="0 0 12 12"><circle cx="6" cy="6" r="5.800" fill="#dc362e"/><path d="M3.400 3.400 L8.600 8.600 M8.600 3.400 L3.400 8.600" stroke="#fff" stroke-width="1.150"/></svg>
</div>
</body>
</html>
